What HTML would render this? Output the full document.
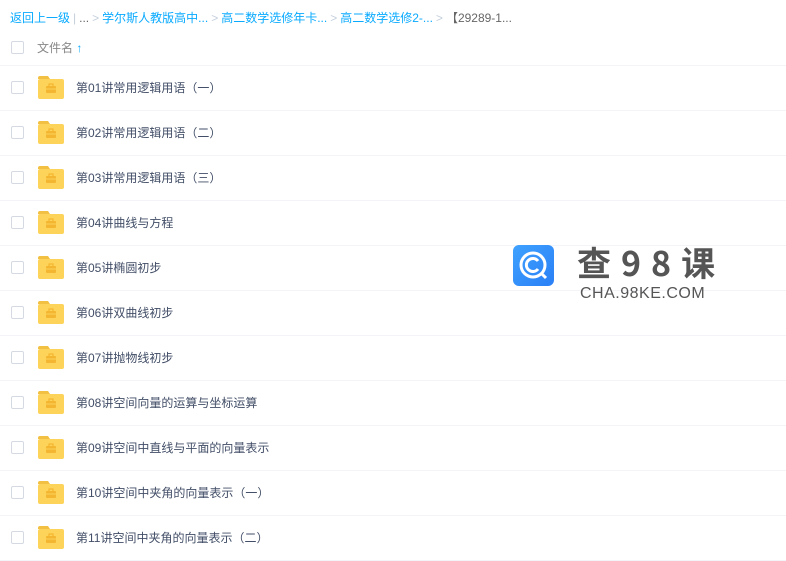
<!DOCTYPE html><html><head><meta charset="utf-8"><style>
body{margin:0;width:786px;height:561px;background:#fff;font-family:"Liberation Sans","Noto Sans CJK SC",sans-serif;overflow:hidden;position:relative}
.bc{position:absolute;top:9px;left:10px;font-size:12px;color:#09aaff;white-space:nowrap}
.bc .g{color:#c5d0dc;margin:0 3px}.bc .d{color:#666}
.hd{position:absolute;top:35px;left:0;right:0;height:30px;border-bottom:1px solid #f2f4f8}
.cb{position:absolute;left:11px;width:13px;height:13px;border:1px solid #d5dae2;border-radius:2px;box-sizing:border-box}
.hd span{position:absolute;left:37px;top:4px;font-size:12px;color:#888}
.row{position:absolute;left:0;right:0;height:45px;border-bottom:1px solid #f2f4f8;box-sizing:border-box}
.row .cb{top:15px}
.row .t{position:absolute;left:76px;top:13px;font-size:12px;color:#424e67}
.logo{position:absolute;left:513px;top:245px}
</style></head><body>
<div class="bc">返回上一级<span class="g">|</span><span class="d">...</span><span class="g">&gt;</span>学尔斯人教版高中...<span class="g">&gt;</span>高二数学选修年卡...<span class="g">&gt;</span>高二数学选修2-...<span class="g">&gt;</span><span class="d">【29289-1...</span></div>
<div class="hd"><div class="cb" style="top:6px"></div><span>文件名 <b style="color:#09aaff">↑</b></span></div>
<div id="rows"></div>
<svg class="logo" width="41" height="41" viewBox="0 0 41 41"><defs><linearGradient id="lg" x1="0" y1="0" x2="1" y2="1"><stop offset="0" stop-color="#3fa2ff"/><stop offset="1" stop-color="#2a7ff5"/></linearGradient></defs><rect width="41" height="41" rx="6" fill="url(#lg)"/><circle cx="20" cy="20" r="12" fill="none" stroke="#fff" stroke-width="3"/><path d="M25 16a6.5 6.5 0 1 0 0 8" fill="none" stroke="#fff" stroke-width="3"/><path d="M28 28l5 5" stroke="#fff" stroke-width="3"/></svg>
<div style="position:absolute;left:577px;top:240px;font-size:34px;color:#555;font-family:'Noto Sans CJK SC',sans-serif;letter-spacing:10px;font-weight:bold;line-height:44px">查98课</div>
<div style="position:absolute;left:580px;top:285px;font-size:16px;color:#555;letter-spacing:0.5px">CHA.98KE.COM</div>
<script>
var n=["第01讲常用逻辑用语（一）","第02讲常用逻辑用语（二）","第03讲常用逻辑用语（三）","第04讲曲线与方程","第05讲椭圆初步","第06讲双曲线初步","第07讲抛物线初步","第08讲空间向量的运算与坐标运算","第09讲空间中直线与平面的向量表示","第10讲空间中夹角的向量表示（一）","第11讲空间中夹角的向量表示（二）"];
var h="";n.forEach(function(t,i){var y=66+45*i;h+='<div class="row" style="top:'+y+'px"><div class="cb"></div><svg style="position:absolute;left:38px;top:10px" width="26" height="23"><path d="M0 2a2 2 0 0 1 2-2h8l2 3H0z" fill="#f2c043"/><rect x="0" y="3" width="26" height="20" rx="2" fill="#fdd35a"/><rect x="8" y="10" width="10" height="7" rx="1" fill="#f4b630"/><rect x="11" y="8" width="4" height="3" fill="none" stroke="#f4b630" stroke-width="1.2"/><line x1="8" y1="13" x2="18" y2="13" stroke="#fdd35a"/></svg><div class="t">'+t+'</div></div>'});
document.getElementById("rows").innerHTML=h;
</script>
</body></html>
